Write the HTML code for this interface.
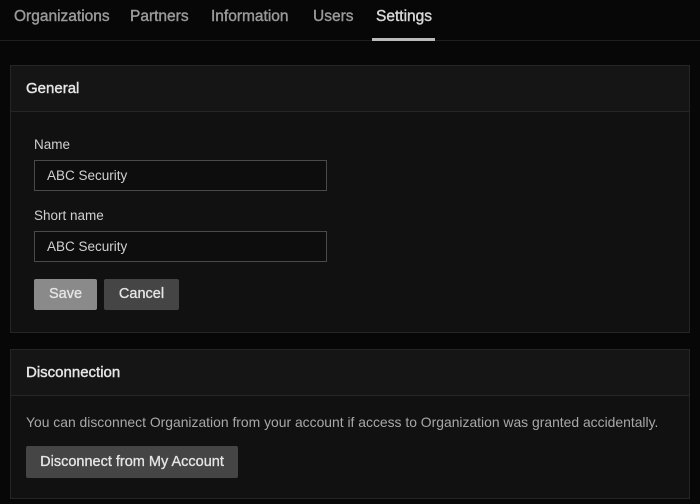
<!DOCTYPE html>
<html><head><style>
*{box-sizing:border-box;margin:0;padding:0}
body{width:700px;height:504px;background:#070707;font-family:"Liberation Sans",sans-serif;color:#ddd;position:relative;overflow:hidden}
.tabs{position:absolute;left:0;top:0;width:700px;height:41px;border-bottom:1px solid #1e1e1e}
.tab{position:absolute;top:8px;font-size:15.5px;color:#9a9a9a;font-weight:normal;-webkit-text-stroke:0.4px #9a9a9a}
.ul{position:absolute;left:372px;top:38px;width:63px;height:3px;background:#bbb}
.panel{position:absolute;left:10px;width:680px;background:#111;border:1px solid #252525}
.hd{height:46px;border-bottom:1px solid #262626;background:#151515;padding:14px 15px;font-size:15px;color:#e6e6e6;-webkit-text-stroke:0.4px #e6e6e6}
.lbl{position:absolute;left:23px;font-size:13.5px;color:#d0d0d0}
.inp{position:absolute;left:23px;width:293px;height:31px;border:1px solid #4a4a4a;background:#0d0d0d;font-size:13.5px;color:#d0d0d0;padding:7px 12px}
.btn{position:absolute;height:31px;border-radius:2px;font-size:14.5px;color:#e6e6e6;text-align:center;line-height:31px;background:#454545;-webkit-text-stroke:0.3px #e6e6e6}
</style></head><body>
<div class="tabs">
<span class="tab" style="left:14px">Organizations</span>
<span class="tab" style="left:130px">Partners</span>
<span class="tab" style="left:211px">Information</span>
<span class="tab" style="left:313px">Users</span>
<span class="tab" style="left:376px;color:#d8d8d8;-webkit-text-stroke:0.4px #d8d8d8">Settings</span>
<div class="ul"></div>
</div>
<div class="panel" style="top:65px;height:268px">
<div class="hd">General</div>
<div class="lbl" style="top:71px">Name</div>
<div class="inp" style="top:94px">ABC Security</div>
<div class="lbl" style="top:142px">Short name</div>
<div class="inp" style="top:165px">ABC Security</div>
<div class="btn" style="left:23px;top:213px;width:63px;background:#8a8a8a">Save</div>
<div class="btn" style="left:93px;top:213px;width:75px">Cancel</div>
</div>
<div class="panel" style="top:349px;height:150px">
<div class="hd">Disconnection</div>
<div style="position:absolute;left:15px;top:64px;font-size:13.9px;color:#a8a8a8">You can disconnect Organization from your account if access to Organization was granted accidentally.</div>
<div class="btn" style="left:15px;top:96px;width:212px;height:32px;line-height:32px">Disconnect from My Account</div>
</div>
</body></html>
